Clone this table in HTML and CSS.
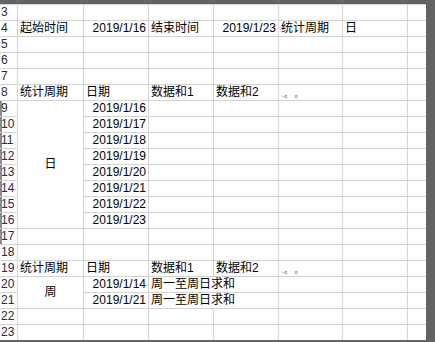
FILE: index.html
```html
<!DOCTYPE html>
<html lang="zh">
<head>
<meta charset="utf-8">
<link rel="stylesheet" href="styles.css">
</head>
<body>
<div class="sheet">
  <div class="rh">3</div><div class="c"></div><div class="c"></div><div class="c"></div><div class="c"></div><div class="c"></div><div class="c"></div><div class="c"></div>
  <div class="rh">4</div><div class="c">起始时间</div><div class="c num">2019/1/16</div><div class="c">结束时间</div><div class="c num">2019/1/23</div><div class="c">统计周期</div><div class="c">日</div><div class="c"></div>
  <div class="rh">5</div><div class="c"></div><div class="c"></div><div class="c"></div><div class="c"></div><div class="c"></div><div class="c"></div><div class="c"></div>
  <div class="rh">6</div><div class="c"></div><div class="c"></div><div class="c"></div><div class="c"></div><div class="c"></div><div class="c"></div><div class="c"></div>
  <div class="rh">7</div><div class="c"></div><div class="c"></div><div class="c"></div><div class="c"></div><div class="c"></div><div class="c"></div><div class="c"></div>
  <div class="rh">8</div><div class="c">统计周期</div><div class="c">日期</div><div class="c">数据和1</div><div class="c">数据和2</div><div class="c dots">.。 。</div><div class="c"></div><div class="c"></div>
  <div class="rh mark">9</div><div class="c merge8">日</div><div class="c num">2019/1/16</div><div class="c"></div><div class="c"></div><div class="c"></div><div class="c"></div><div class="c"></div>
  <div class="rh mark">10</div><div class="c num">2019/1/17</div><div class="c"></div><div class="c"></div><div class="c"></div><div class="c"></div><div class="c"></div>
  <div class="rh mark">11</div><div class="c num">2019/1/18</div><div class="c"></div><div class="c"></div><div class="c"></div><div class="c"></div><div class="c"></div>
  <div class="rh mark">12</div><div class="c num">2019/1/19</div><div class="c"></div><div class="c"></div><div class="c"></div><div class="c"></div><div class="c"></div>
  <div class="rh mark">13</div><div class="c num">2019/1/20</div><div class="c"></div><div class="c"></div><div class="c"></div><div class="c"></div><div class="c"></div>
  <div class="rh mark">14</div><div class="c num">2019/1/21</div><div class="c"></div><div class="c"></div><div class="c"></div><div class="c"></div><div class="c"></div>
  <div class="rh mark">15</div><div class="c num">2019/1/22</div><div class="c"></div><div class="c"></div><div class="c"></div><div class="c"></div><div class="c"></div>
  <div class="rh mark">16</div><div class="c num">2019/1/23</div><div class="c"></div><div class="c"></div><div class="c"></div><div class="c"></div><div class="c"></div>
  <div class="rh mark">17</div><div class="c"></div><div class="c"></div><div class="c"></div><div class="c"></div><div class="c"></div><div class="c"></div><div class="c"></div>
  <div class="rh">18</div><div class="c"></div><div class="c"></div><div class="c"></div><div class="c"></div><div class="c"></div><div class="c"></div><div class="c"></div>
  <div class="rh">19</div><div class="c">统计周期</div><div class="c">日期</div><div class="c">数据和1</div><div class="c">数据和2</div><div class="c dots">.。 。</div><div class="c"></div><div class="c"></div>
  <div class="rh">20</div><div class="c merge2">周</div><div class="c num">2019/1/14</div><div class="c wide">周一至周日求和</div><div class="c"></div><div class="c"></div><div class="c"></div>
  <div class="rh">21</div><div class="c num">2019/1/21</div><div class="c wide">周一至周日求和</div><div class="c"></div><div class="c"></div><div class="c"></div>
  <div class="rh">22</div><div class="c"></div><div class="c"></div><div class="c"></div><div class="c"></div><div class="c"></div><div class="c"></div><div class="c"></div>
  <div class="rh">23</div><div class="c"></div><div class="c"></div><div class="c"></div><div class="c"></div><div class="c"></div><div class="c"></div><div class="c"></div>
</div>
</body>
</html>
```

FILE: styles.css
```css
html, body {
  margin: 0;
  padding: 0;
  background: #636363;
  height: 100%;
  overflow: hidden;
}

.sheet {
  margin-top: 4px;
  width: 426px;
  display: grid;
  grid-template-columns: 17px 65px 64px 64px 64px 63px 64px 1fr;
  grid-auto-rows: 15px;
  gap: 1px;
  padding-top: 1px;
  background: #d4d4d4;
  font-family: "Liberation Sans", "Noto Sans CJK SC", sans-serif;
  font-size: 12px;
  color: #000;
}

.rh {
  background: #fff;
  color: #2a2a3a;
  line-height: 15px;
  padding-left: 1px;
  white-space: nowrap;
  overflow: hidden;
}

.mark {
  box-shadow: inset 2px 0 0 #8c8c8c;
}

.c {
  background: #fff;
  line-height: 15px;
  padding: 0 2px;
  white-space: nowrap;
  overflow: visible;
  position: relative;
}

.num {
  text-align: right;
  padding-right: 2px;
}

.merge8 {
  grid-row: span 8;
  display: flex;
  align-items: center;
  justify-content: center;
}

.merge2 {
  grid-row: span 2;
  display: flex;
  align-items: center;
  justify-content: center;
}

.wide {
  grid-column: span 2;
}

.dots {
  font-size: 8px;
  color: #2b4a9a;
  padding-left: 3px;
  padding-top: 2px;
}
```
